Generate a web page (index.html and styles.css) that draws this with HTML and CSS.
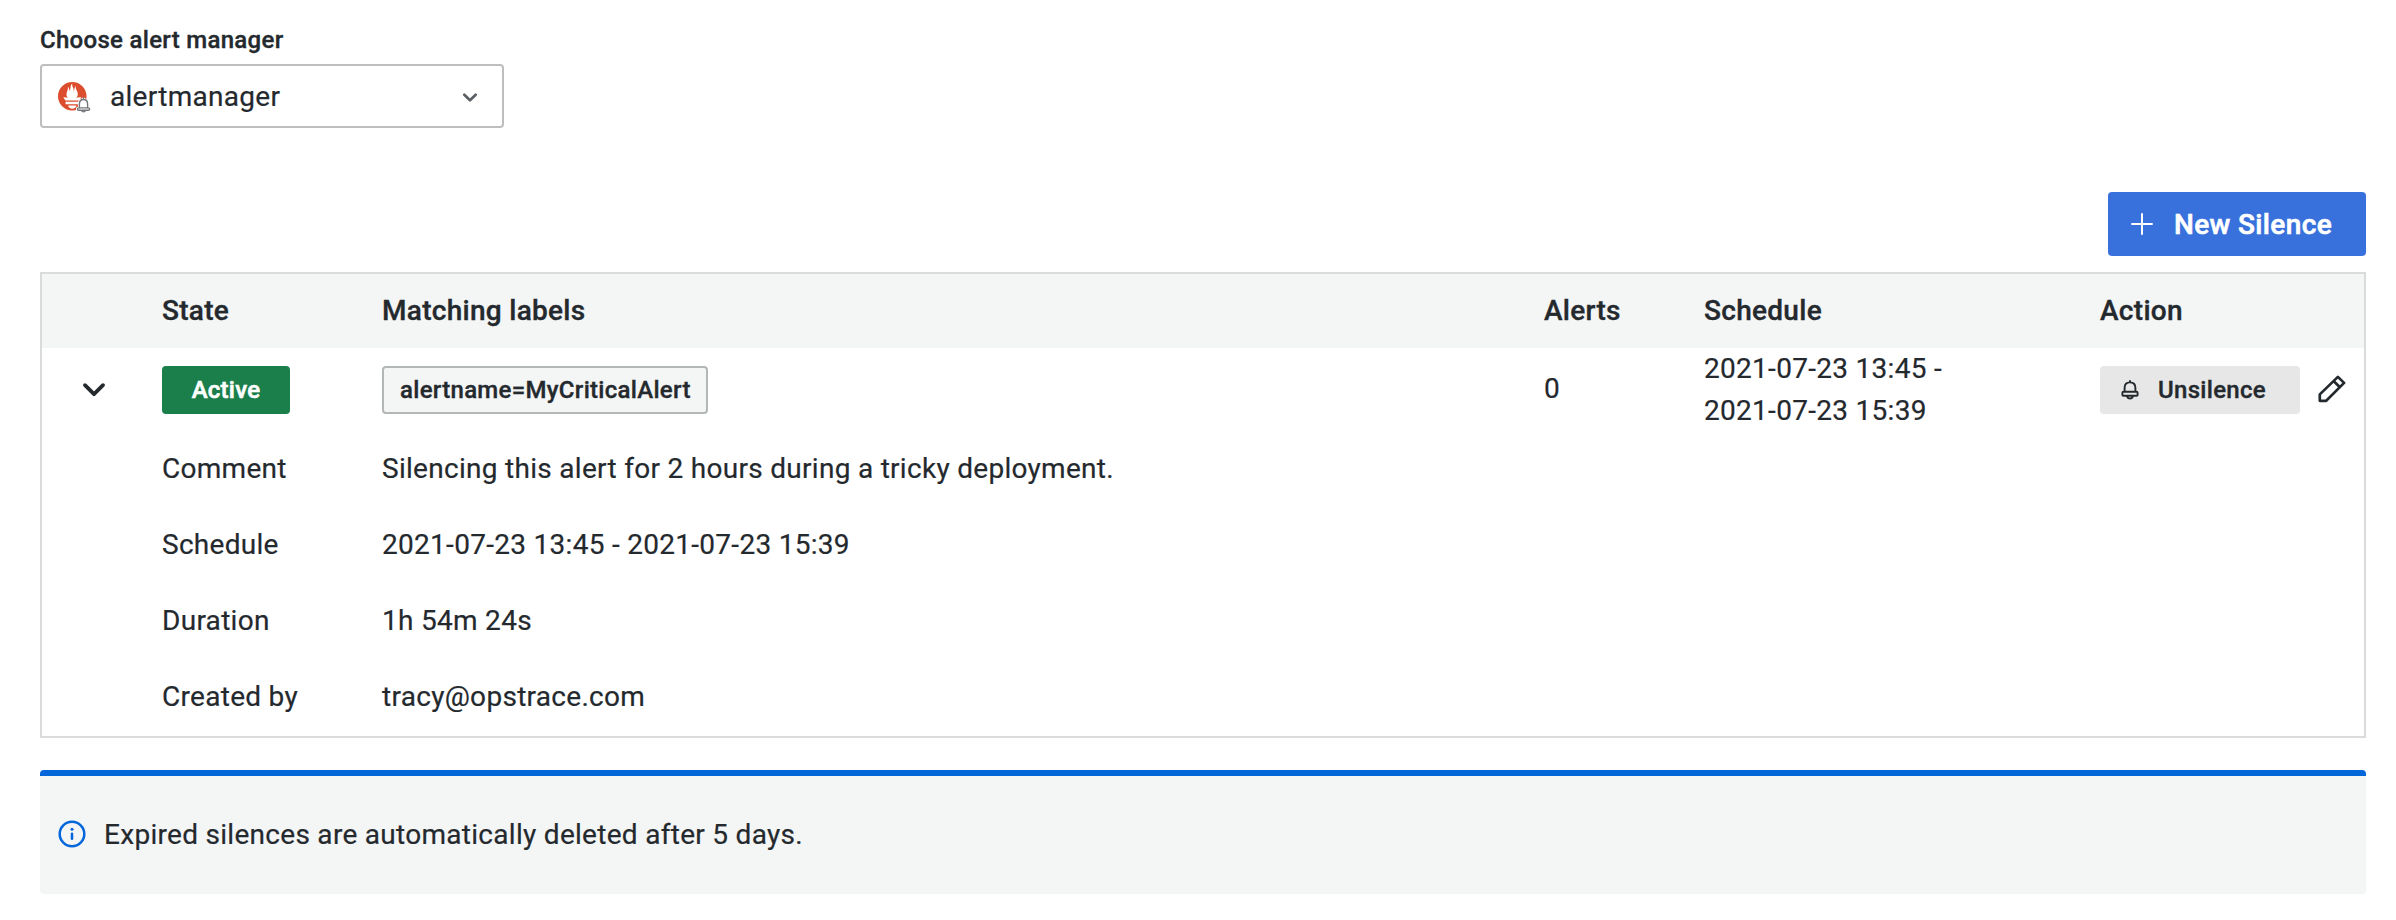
FILE: index.html
```
<!DOCTYPE html>
<html lang="en">
<head>
<meta charset="utf-8">
<title>Silences</title>
<link rel="stylesheet" href="styles.css">
</head>
<body>
<main class="page">
  <label class="field-label">Choose alert manager</label>
  <div class="select">
    <svg class="select-logo" viewBox="0 0 34 34" width="34" height="34">
      <path transform="scale(1.19)" fill="#db4d2d" d="M12 0C5.373 0 0 5.372 0 12c0 6.627 5.373 12 12 12s12-5.373 12-12c0-6.628-5.373-12-12-12zm0 22.460c-1.885 0-3.414-1.260-3.414-2.814h6.828c0 1.553-1.528 2.813-3.414 2.813zm5.640-3.745H6.360v-2.046h11.280v2.046zm-.040-3.098H6.390c-.037-.043-.075-.086-.111-.130-1.155-1.401-1.427-2.133-1.690-2.879-.005-.025 1.400.287 2.395.511 0 0 .513.119 1.262.255-.720-.843-1.147-1.915-1.147-3.010 0-2.406 1.845-4.508 1.180-6.207.648.053 1.340 1.367 1.387 3.422.689-.951.977-2.690.977-3.755 0-1.103.727-2.385 1.454-2.429-.648 1.069.168 1.984.894 4.256.272.854.237 2.290.447 3.201.070-1.892.395-4.652 1.595-5.605-.529 1.200.079 2.702.494 3.424.671 1.164 1.078 2.047 1.078 3.716 0 1.120-.410 2.180-1.110 2.996.792-.149 1.340-.283 1.340-.283l2.573-.502s-.374 1.538-1.810 3.019z"/>
      <path d="M25.500 15.800v1.800M21.400 26v-3.800c0-2.900 1.500-4.700 4.100-4.700s4.100 1.800 4.100 4.700V26M23.500 28.600c.7 1.700 3.300 1.700 4 0M20.700 25.900h9.600c.9 0 1.300.5 1.300 1.200s-.4 1.200-1.300 1.200h-9.600c-.9 0-1.300-.5-1.300-1.200s.4-1.200 1.300-1.200z" fill="#fff" stroke="#fff" stroke-width="3"/>
      <path d="M25.500 15.800v1.800M21.400 26v-3.800c0-2.900 1.500-4.700 4.100-4.700s4.100 1.800 4.100 4.700V26M23.500 28.600c.7 1.700 3.300 1.700 4 0M20.700 25.900h9.600c.9 0 1.300.5 1.300 1.200s-.4 1.200-1.300 1.200h-9.600c-.9 0-1.300-.5-1.300-1.200s.4-1.200 1.300-1.200z" fill="#fff" stroke="#747779" stroke-width="1.400" stroke-linecap="round"/>
    </svg>
    <span class="select-value">alertmanager</span>
    <svg class="select-caret" viewBox="0 0 16 12" width="16" height="12"><path d="M2.300 2.800L8 8.300l5.700-5.500" fill="none" stroke="#5b6065" stroke-width="2.700" stroke-linecap="round" stroke-linejoin="round"/></svg>
  </div>

  <div class="toolbar">
    <button class="btn-primary">
      <svg viewBox="0 0 22 22" width="22" height="22"><path d="M11 1v20M1 11h20" stroke="#fff" stroke-width="2" stroke-linecap="round"/></svg>
      <span>New Silence</span>
    </button>
  </div>

  <section class="table">
    <div class="row head">
      <span></span><span>State</span><span>Matching labels</span><span>Alerts</span><span>Schedule</span><span>Action</span>
    </div>
    <div class="row silence">
      <svg class="expander" viewBox="0 0 24 16" width="24" height="16"><path d="M3 3.200l9 9 9-9" fill="none" stroke="#24292e" stroke-width="3.800" stroke-linecap="round" stroke-linejoin="round"/></svg>
      <div><span class="badge">Active</span></div>
      <div><span class="tag">alertname=MyCriticalAlert</span></div>
      <div class="count">0</div>
      <div>2021-07-23 13:45 -<br>2021-07-23 15:39</div>
      <div class="actions">
        <button class="btn-secondary">
          <svg viewBox="0 0 18 22" width="18" height="22"><path d="M3.600 12.600V8.900C3.600 5.400 5.700 3.400 9 3.400s5.400 2 5.400 5.500v3.700M9 3.200V2M2.600 12.700h12.800c.7 0 1.200.4 1.200 1v2.200c0 .5-.4.8-1 .8H2.400c-.6 0-1-.3-1-.8v-2.200c0-.6.500-1 1.200-1zM6.200 17.500c.7 2.700 4.900 2.700 5.600 0" fill="none" stroke="#24292e" stroke-width="1.900" stroke-linecap="round"/></svg>
          <span>Unsilence</span>
        </button>
        <svg class="pencil" viewBox="0 0 28 28" width="28" height="28"><path d="M1.800 25.800V19.400L19.900 1.900L26.100 7.900L8.200 25.800ZM15.800 6.200L21.900 12.200" fill="none" stroke="#24292e" stroke-width="2.700" stroke-linejoin="round"/></svg>
      </div>
    </div>
    <div class="row detail"><span></span><span>Comment</span><span class="wide">Silencing this alert for 2 hours during a tricky deployment.</span></div>
    <div class="row detail"><span></span><span>Schedule</span><span class="wide">2021-07-23 13:45 - 2021-07-23 15:39</span></div>
    <div class="row detail"><span></span><span>Duration</span><span class="wide">1h 54m 24s</span></div>
    <div class="row detail"><span></span><span>Created by</span><span class="wide">tracy@opstrace.com</span></div>
  </section>

  <aside class="notice">
    <svg viewBox="0 0 28 28" width="28" height="28"><circle cx="14" cy="14" r="12.300" fill="none" stroke="#0366d9" stroke-width="2.500"/><circle cx="14" cy="9.200" r="1.500" fill="#0366d9"/><path d="M14 13.700v5.100" stroke="#0366d9" stroke-width="2.500" stroke-linecap="round"/></svg>
    <span class="notice-text">Expired silences are automatically deleted after 5 days.</span>
  </aside>
</main>
</body>
</html>
```
FILE: styles.css
```
* { box-sizing: border-box; }

body {
  margin: 0;
  background: #fff;
  color: #24292e;
  font: 400 28px/42px Roboto, sans-serif;
  letter-spacing: 0.29px;
  -webkit-text-stroke: 0.2px;
}

svg { display: block; flex: none; }

button {
  border: 0;
  border-radius: 4px;
  font: inherit;
  letter-spacing: inherit;
  color: inherit;
  display: flex;
  align-items: center;
}

.page { padding: 24px 30px 0 40px; }

.field-label {
  display: block;
  height: 40px;
  font-size: 24px;
  font-weight: 500;
  line-height: 32px;
  letter-spacing: 0.3px;
  -webkit-text-stroke: 0.35px;
}

.select {
  width: 464px;
  height: 64px;
  border: 2px solid #bdbebe;
  border-radius: 4px;
  display: flex;
  align-items: center;
  padding: 0 24px 0 16px;
}
.select-logo { margin-top: 6px; }
.select-value { flex: 1; margin-left: 18px; padding-top: 2px; }
.select-caret { margin-top: 4px; }

.toolbar {
  display: flex;
  justify-content: flex-end;
  padding: 64px 0 16px;
}
.btn-primary {
  width: 258px;
  height: 64px;
  padding: 0 0 0 23px;
  gap: 21px;
  background: #3871dc;
  color: #fff;
  font-weight: 500;
  letter-spacing: 0.36px;
  -webkit-text-stroke: 0.6px;
}
.btn-primary span { padding-top: 2px; }

.table { border: 2px solid #dadbdb; }

.row {
  display: grid;
  grid-template-columns: 120px 220px 1162px 160px 396px 1fr;
}
.head {
  height: 74px;
  padding-top: 16px;
  background: #f4f5f5;
  font-weight: 500;
  -webkit-text-stroke: 0.35px;
}
.silence { height: 84px; align-items: center; }
.expander { margin-left: 40px; }
.count { margin-top: -2px; }

.badge, .tag {
  display: block;
  width: fit-content;
  height: 48px;
  border-radius: 4px;
  font-size: 24px;
  font-weight: 500;
  line-height: 48px;
  letter-spacing: 0.26px;
  -webkit-text-stroke: 0.35px;
}
.badge {
  width: 128px;
  text-align: center;
  background: #1a7f4b;
  color: #fff;
  -webkit-text-stroke: 0.6px;
}
.tag {
  width: 326px;
  padding-left: 16px;
  border: 2px solid #b4b7b7;
  background: #f4f5f5;
  line-height: 44px;
  letter-spacing: 0.3px;
}

.actions { display: flex; align-items: center; gap: 18px; }
.btn-secondary {
  width: 200px;
  height: 48px;
  padding: 0 0 0 21px;
  gap: 19px;
  background: #e7e7e7;
  font-size: 24px;
  font-weight: 500;
  letter-spacing: 0.3px;
  -webkit-text-stroke: 0.35px;
}
.pencil { margin-top: -3px; }

.detail { height: 76px; padding-top: 16px; }
.wide { grid-column: 3 / -1; }

.notice {
  height: 124px;
  margin-top: 32px;
  padding: 0 18px 2px;
  display: flex;
  align-items: center;
  gap: 18px;
  border-top: 6px solid #0366d9;
  border-radius: 4px;
  background: #f4f5f5;
}
.notice-text { padding-top: 2px; }
```
